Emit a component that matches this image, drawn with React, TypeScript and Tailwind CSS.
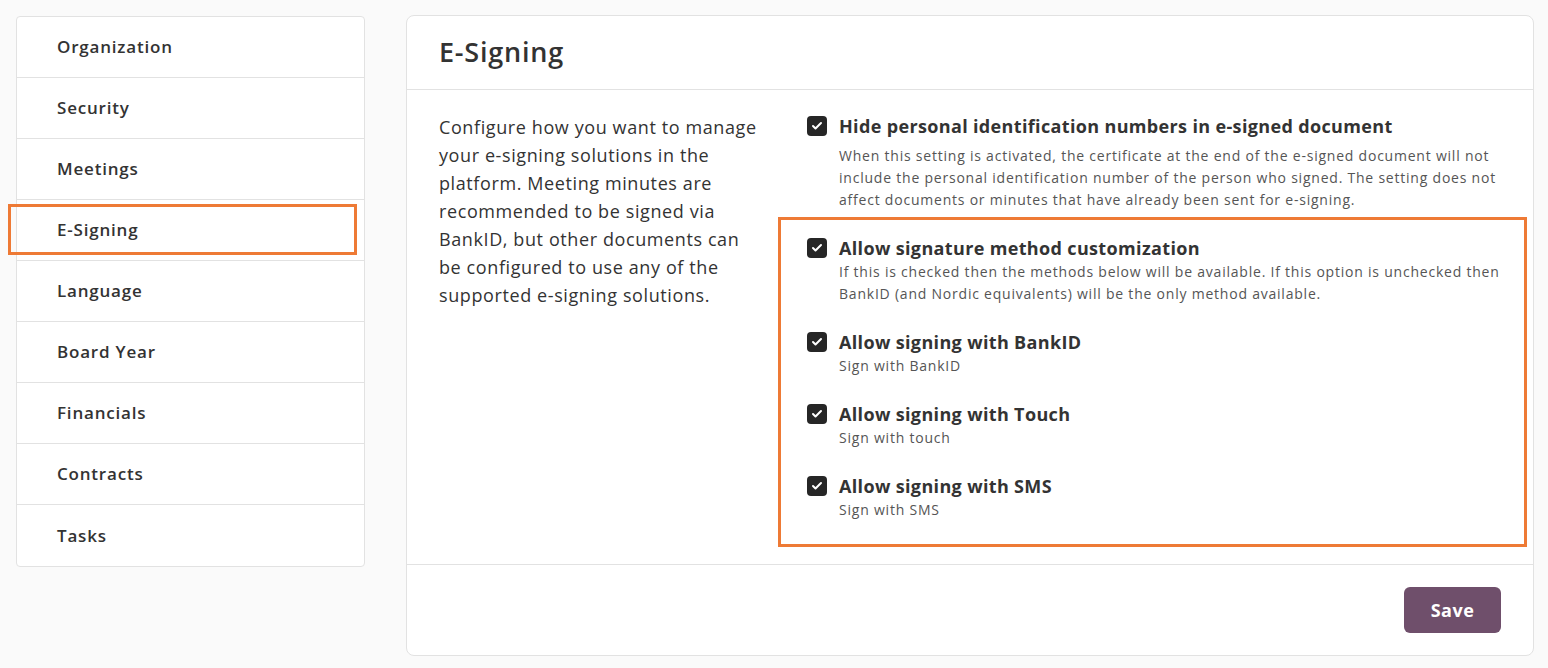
import { Check } from "lucide-react"

const menu = [
  "Organization",
  "Security",
  "Meetings",
  "E-Signing",
  "Language",
  "Board Year",
  "Financials",
  "Contracts",
  "Tasks",
]

function Checkbox() {
  return (
    <span className="mt-[3px] flex h-5 w-5 shrink-0 items-center justify-center rounded-[4px] bg-[#262626]">
      <Check className="h-3 w-3 text-white" strokeWidth={4} />
    </span>
  )
}

function Option({ title, desc, descClass = "" }: { title: string; desc: string; descClass?: string }) {
  return (
    <div className="flex gap-3">
      <Checkbox />
      <div>
        <div className="text-[18px] font-bold leading-[26px] tracking-[0.35px] text-[#333]">{title}</div>
        <p className={"text-[14px] leading-[22px] tracking-[0.78px] text-[#555] " + descClass}>{desc}</p>
      </div>
    </div>
  )
}

export default function App() {
  return (
    <div
      className="flex min-h-screen items-start gap-[41px] bg-[#fafafa] pl-4 pr-[14px] pt-[15px]"
      style={{ fontFamily: "'Open Sans', Lato, sans-serif" }}
    >
      {/* Sidebar */}
      <nav className="relative mt-px w-[349px] shrink-0 rounded-[4px] border border-[#e2e2e2] bg-white">
        {menu.map((item, i) => (
          <div
            key={item}
            className={
              "flex h-[61px] items-center pl-10 text-[17px] font-semibold tracking-[0.8px] text-[#333] " +
              (i < menu.length - 1 ? "border-b border-[#e2e2e2]" : "")
            }
          >
            {item}
          </div>
        ))}
        {/* highlight annotation */}
        <div className="pointer-events-none absolute left-[-9px] top-[187px] h-[51px] w-[349px] border-[3px] border-[#ee7a35]" />
      </nav>

      {/* Main card */}
      <section className="flex-1 rounded-lg border border-[#e2e2e2] bg-white">
        <header className="flex h-[74px] items-center border-b border-[#e2e2e2] px-8">
          <h1 className="text-[27px] font-semibold tracking-[0.8px] text-[#333]">E-Signing</h1>
        </header>

        <div className="flex gap-12 px-8 pb-[17px] pt-[23px]">
          <p className="w-[320px] shrink-0 text-[18px] leading-[28px] tracking-[0.6px] text-[#333]">
            Configure how you want to manage your e-signing solutions in the platform. Meeting minutes are
            recommended to be signed via BankID, but other documents can be configured to use any of the
            supported e-signing solutions.
          </p>

          <div className="flex-1">
            <Option
              title="Hide personal identification numbers in e-signed document"
              desc="When this setting is activated, the certificate at the end of the e-signed document will not include the personal identification number of the person who signed. The setting does not affect documents or minutes that have already been sent for e-signing."
              descClass="mt-[6px]"
            />

            <div className="relative mt-6 flex flex-col gap-6 pb-[26px]">
              <Option
                title="Allow signature method customization"
                desc="If this is checked then the methods below will be available. If this option is unchecked then BankID (and Nordic equivalents) will be the only method available."
              />
              <Option title="Allow signing with BankID" desc="Sign with BankID" />
              <Option title="Allow signing with Touch" desc="Sign with touch" />
              <Option title="Allow signing with SMS" desc="Sign with SMS" />
              {/* highlight annotation */}
              <div className="pointer-events-none absolute bottom-0 left-[-29px] right-[-26px] top-[-18px] border-[3px] border-[#ee7a35]" />
            </div>
          </div>
        </div>

        <footer className="flex justify-end border-t border-[#e2e2e2] px-8 py-[22px]">
          <button className="h-[46px] w-[97px] rounded-md bg-[#6f4f6b] text-[18px] font-bold tracking-[0.5px] text-white">
            Save
          </button>
        </footer>
      </section>
    </div>
  )
}
